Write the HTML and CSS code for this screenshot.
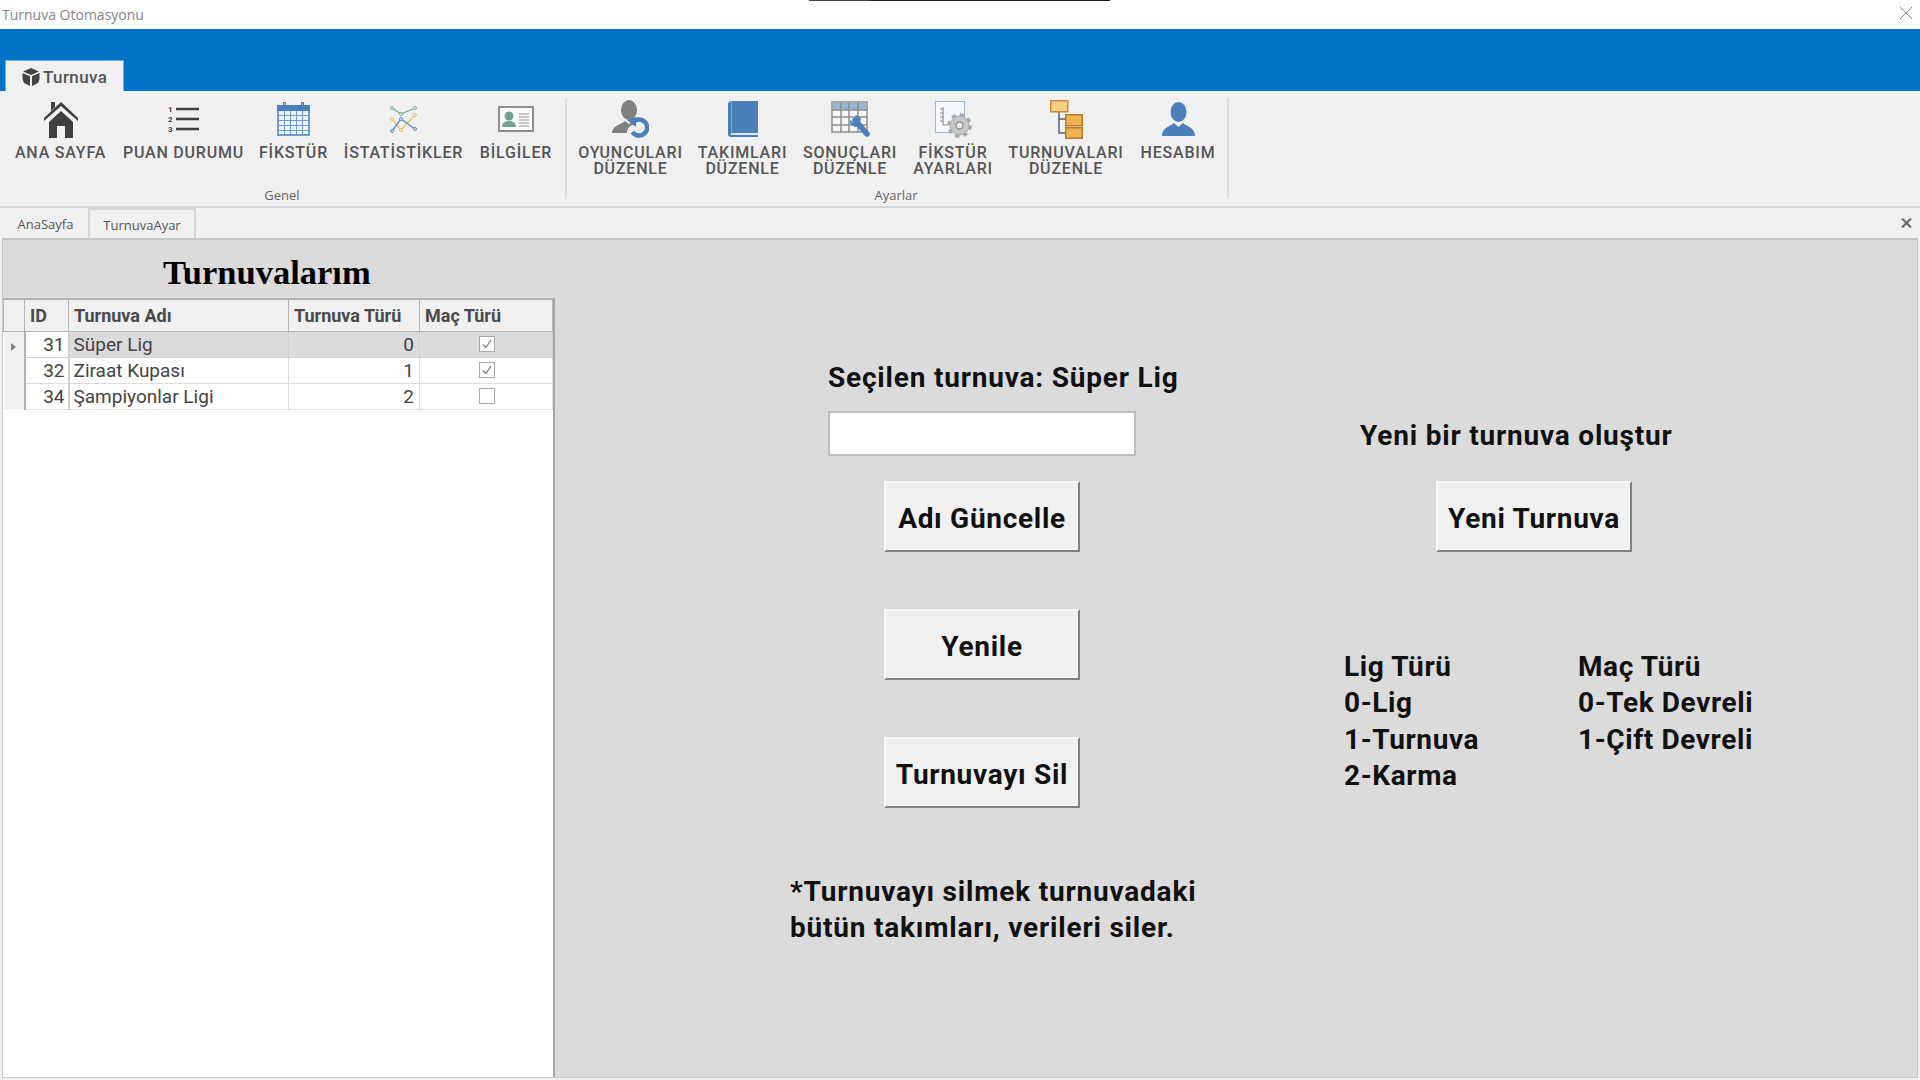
FILE: index.html
```html
<!DOCTYPE html>
<html lang="tr">
  <head>
    <meta charset="UTF-8" />
    <title>Turnuva Otomasyonu</title>
    <link rel="stylesheet" href="styles.css">
  </head>
  <body>
    <!-- Title bar -->
    <div class="titlebar">
      <span class="app-title">Turnuva Otomasyonu</span>
      <span class="top-line"></span>
      <svg class="close-icon" width="12" height="12" viewBox="0 0 12 12"><path d="M0 0L12 12M12 0L0 12" stroke="#8a8a8a" stroke-width="1" fill="none"/></svg>
    </div>

    <!-- Ribbon tab strip -->
    <div class="tabstrip">
      <div class="ribbon-tab">
        <svg width="18" height="18" viewBox="0 0 18 18"><path d="M9 0L17 3.5L9 7L1 3.5Z" fill="#444"/><path d="M0.500 5L8 8.300V18L2 15L0.500 11Z" fill="#444"/><path d="M17.500 5L10 8.300V18L16 15L17.500 11Z" fill="#444"/></svg>
        <span>Turnuva</span>
      </div>
    </div>

    <!-- Ribbon -->
    <div class="ribbon">
      <div class="group group-genel">
        <div class="items">
          <div class="item w-ana">
            <div class="icon"><svg width="34" height="37" viewBox="0 0 34 37"><path d="M7 1H11V6L7 10Z" fill="#3f3f3f"/><path d="M0 17L17 1L34 17V20L17 5L0 20Z" fill="#3f3f3f"/><path d="M5 21L17 10L29 21V37H21V25H13V37H5Z" fill="#3f3f3f"/></svg></div>
            <div class="label">ANA SAYFA</div>
          </div>
          <div class="item w-puan">
            <div class="icon"><svg width="31" height="30" viewBox="0 0 31 30"><text x="0" y="8" class="mini">1</text><text x="0" y="18" class="mini">2</text><text x="0" y="28" class="mini">3</text><path d="M8 5H31M8 15H31M8 25H31" stroke="#3f3f3f" stroke-width="2.500"/></svg></div>
            <div class="label">PUAN DURUMU</div>
          </div>
          <div class="item w-fikstur">
            <div class="icon"><svg width="33" height="34" viewBox="0 0 33 34"><rect x="0" y="8" width="33" height="26" fill="#6f9bcb"/><rect x="0" y="3" width="33" height="6" fill="#4a7fba"/><rect x="6" y="0" width="3" height="6" fill="#4a7fba"/><rect x="24" y="0" width="3" height="6" fill="#4a7fba"/><path d="M7 2H8M25 2H26" stroke="#fff"/><path d="M2 9H7V13H2ZM8 9H13V13H8ZM14 9H19V13H14ZM20 9H25V13H20ZM26 9H31V13H26ZM2 14H7V18H2ZM8 14H13V18H8ZM14 14H19V18H14ZM20 14H25V18H20ZM26 14H31V18H26ZM2 19H7V23H2ZM8 19H13V23H8ZM14 19H19V23H14ZM20 19H25V23H20ZM26 19H31V23H26ZM2 24H7V28H2ZM8 24H13V28H8ZM14 24H19V28H14ZM20 24H25V28H20ZM26 24H31V28H26ZM2 29H7V32H2ZM8 29H13V32H8ZM14 29H19V32H14ZM20 29H25V32H20ZM26 29H31V32H26Z" fill="#eef3f9"/></svg></div>
            <div class="label">FİKSTÜR</div>
          </div>
          <div class="item w-ist">
            <div class="icon"><svg width="28" height="27" viewBox="0 0 28 27">
              <path d="M2 2L11 8L25 2" stroke="#7fb09a" stroke-width="1.300" fill="none"/>
              <path d="M2 13L11 24L25 9" stroke="#e8c264" stroke-width="1.300" fill="none"/>
              <path d="M2 25L11 13L25 23" stroke="#5b8dc4" stroke-width="1.300" fill="none"/>
              <g fill="#f0f0f0" stroke-width="1"><circle cx="2" cy="2" r="1.500" stroke="#7fb09a"/><circle cx="11" cy="8" r="1.500" stroke="#7fb09a"/><circle cx="25" cy="2" r="1.500" stroke="#7fb09a"/><circle cx="2" cy="13" r="1.500" stroke="#e8c264"/><circle cx="11" cy="24" r="1.500" stroke="#e8c264"/><circle cx="25" cy="9" r="1.500" stroke="#e8c264"/><circle cx="2" cy="25" r="1.500" stroke="#5b8dc4"/><circle cx="11" cy="13" r="1.500" stroke="#5b8dc4"/><circle cx="25" cy="23" r="1.500" stroke="#5b8dc4"/></g>
            </svg></div>
            <div class="label">İSTATİSTİKLER</div>
          </div>
          <div class="item w-bilgi">
            <div class="icon"><svg width="36" height="26" viewBox="0 0 36 26"><rect x="1" y="1" width="34" height="24" fill="#fff" stroke="#8f8f8f" stroke-width="2"/><circle cx="11" cy="10" r="4.500" fill="#6fa48f"/><path d="M4 21C4 16 8 15 11 15C14 15 18 16 18 21Z" fill="#6fa48f"/><path d="M21 8H31M21 11H31M21 14H31M21 17H31M21 20H31" stroke="#8f8f8f" stroke-width="1"/></svg></div>
            <div class="label">BİLGİLER</div>
          </div>
        </div>
        <div class="caption">Genel</div>
      </div>

      <div class="group group-ayarlar">
        <div class="items">
          <div class="item w-oyuncu">
            <div class="icon"><svg width="37" height="38" viewBox="0 0 37 38"><ellipse cx="17" cy="10" rx="8" ry="10" fill="#808080"/><path d="M0 33C0 26 8 25 13 21L17 24L21 21L24 24C18 25 15 28 15 33Z" fill="#808080"/><path d="M21 22.500A8 8 0 1 1 20.500 32" stroke="#4a7fba" stroke-width="4.500" fill="none"/><path d="M15 20L24 17V27Z" fill="#4a7fba"/></svg></div>
            <div class="label">OYUNCULARI<br>DÜZENLE</div>
          </div>
          <div class="item w-takim">
            <div class="icon"><svg width="30" height="36" viewBox="0 0 30 36"><path d="M4 0H30V32H4C2 32 2 34 4 34H30V36H3C1 36 0 35 0 33V3C0 1 2 0 4 0Z" fill="#4a7fba"/><path d="M3 33.200H30" stroke="#cfe0f0" stroke-width="1"/><path d="M3.500 0V31" stroke="#7ca6d2" stroke-width="1"/></svg></div>
            <div class="label">TAKIMLARI<br>DÜZENLE</div>
          </div>
          <div class="item w-sonuc">
            <div class="icon"><svg width="39" height="36" viewBox="0 0 39 36"><rect x="1" y="1" width="35" height="30" fill="#f5f5f5" stroke="#8f8f8f" stroke-width="1.500"/><rect x="2" y="2" width="33" height="7" fill="#95b6d9"/><path d="M10 1V31M18 1V31M27 1V31M1 9H36M1 16H36M1 24H36" stroke="#8f8f8f" stroke-width="1.500"/><path d="M24 19L36 33" stroke="#4a7fba" stroke-width="5.500" stroke-linecap="round"/><path d="M19 19A6 6 0 0 0 28 25L30 18C29 15 26 14 24 14L27 19L23 22Z" fill="#4a7fba"/></svg></div>
            <div class="label">SONUÇLARI<br>DÜZENLE</div>
          </div>
          <div class="item w-ayar">
            <div class="icon"><svg width="37" height="37" viewBox="0 0 37 37"><rect x="0.500" y="0.500" width="29" height="31" fill="#f4f7fb" stroke="#9db7d6"/><path d="M8 6V24H13M8 8H5M8 12H5M8 16H5M8 20H5" stroke="#8f8f8f" stroke-width="1.200" fill="none"/><circle cx="24.500" cy="24.500" r="9.500" fill="#c9c9c9" stroke="#a8a8a8" stroke-width="1"/><circle cx="24.500" cy="24.500" r="10.500" fill="none" stroke="#a8a8a8" stroke-width="3.500" stroke-dasharray="4.200 4.050"/><circle cx="24.500" cy="24.500" r="3.500" fill="#f0f0f0" stroke="#8f8f8f" stroke-width="1.500"/></svg></div>
            <div class="label">FİKSTÜR<br>AYARLARI</div>
          </div>
          <div class="item w-turnuva">
            <div class="icon"><svg width="33" height="39" viewBox="0 0 33 39"><path d="M9 10V33H16M9 19H16" stroke="#5a6270" stroke-width="1.500" fill="none"/><rect x="0.750" y="0.750" width="17" height="11" fill="#f6cf84" stroke="#c98a3a" stroke-width="1.500"/><rect x="15.750" y="14.750" width="16.500" height="11" fill="#f0b24e" stroke="#b97a2c" stroke-width="1.500"/><rect x="15.750" y="27.750" width="16.500" height="10.500" fill="#f0b24e" stroke="#b97a2c" stroke-width="1.500"/></svg></div>
            <div class="label">TURNUVALARI<br>DÜZENLE</div>
          </div>
          <div class="item w-hesap">
            <div class="icon"><svg width="33" height="34" viewBox="0 0 33 34"><ellipse cx="16.500" cy="10" rx="8" ry="10" fill="#4a7fba"/><path d="M0 34C0 26 7 25 12 21L16.500 25L21 21C26 25 33 26 33 34Z" fill="#4a7fba"/></svg></div>
            <div class="label">HESABIM</div>
          </div>
        </div>
        <div class="caption">Ayarlar</div>
      </div>
    </div>

    <!-- Document tabs -->
    <div class="doctabs">
      <div class="doctab">AnaSayfa</div>
      <div class="doctab active">TurnuvaAyar</div>
      <svg class="doc-close" width="11" height="10" viewBox="0 0 11 10"><path d="M1 0.500L10 9.500M10 0.500L1 9.500" stroke="#6e6e6e" stroke-width="2.200" fill="none"/></svg>
    </div>

    <!-- Main -->
    <main class="pane">
      <section class="left-panel">
        <h1 class="panel-title">Turnuvalarım</h1>
        <div class="grid-wrap">
          <table class="grid">
            <thead>
              <tr>
                <th class="c-head"></th>
                <th class="c-id">ID</th>
                <th class="c-name">Turnuva Adı</th>
                <th class="c-type">Turnuva Türü</th>
                <th class="c-match">Maç Türü</th>
              </tr>
            </thead>
            <tbody>
              <tr class="selected">
                <td class="c-head"><span class="row-arrow"></span></td>
                <td class="num id-cell">31</td>
                <td>Süper Lig</td>
                <td class="num">0</td>
                <td class="check-cell"><span class="check"><svg width="14" height="14" viewBox="0 0 14 14"><path d="M3 7.500L6 10.500L11 3" stroke="#808080" stroke-width="1.300" fill="none"/></svg></span></td>
              </tr>
              <tr>
                <td class="c-head"></td>
                <td class="num id-cell">32</td>
                <td>Ziraat Kupası</td>
                <td class="num">1</td>
                <td class="check-cell"><span class="check"><svg width="14" height="14" viewBox="0 0 14 14"><path d="M3 7.500L6 10.500L11 3" stroke="#808080" stroke-width="1.300" fill="none"/></svg></span></td>
              </tr>
              <tr>
                <td class="c-head"></td>
                <td class="num id-cell">34</td>
                <td>Şampiyonlar Ligi</td>
                <td class="num">2</td>
                <td class="check-cell"><span class="check"></span></td>
              </tr>
            </tbody>
          </table>
        </div>
      </section>

      <section class="form-area">
        <div class="col-edit">
          <div class="text selected-label">Seçilen turnuva: Süper Lig</div>
          <input class="name-input" type="text" />
          <button class="btn first-btn">Adı Güncelle</button>
          <button class="btn">Yenile</button>
          <button class="btn">Turnuvayı Sil</button>
          <p class="text note">*Turnuvayı silmek turnuvadaki<br>bütün takımları, verileri siler.</p>
        </div>
        <div class="col-new">
          <div class="text new-label">Yeni bir turnuva oluştur</div>
          <button class="btn new-btn">Yeni Turnuva</button>
          <div class="legend">
            <div class="text">Lig Türü<br>0-Lig<br>1-Turnuva<br>2-Karma</div>
            <div class="text">Maç Türü<br>0-Tek Devreli<br>1-Çift Devreli</div>
          </div>
        </div>
      </section>
    </main>
  </body>
</html>
```

FILE: styles.css
```css
/* Turnuva Otomasyonu */

* {
  margin: 0;
  padding: 0;
  box-sizing: border-box;
}

html,
body {
  height: 100%;
  overflow: hidden;
}

body {
  font-family: Roboto, "Liberation Sans", sans-serif;
  background: #f0f0f0;
  color: #555;
}

/* Title bar */
.titlebar {
  position: relative;
  height: 29px;
  background: #fff;
  display: flex;
  align-items: center;
  padding-left: 2px;
}

.app-title {
  font-family: "Open Sans", sans-serif;
  font-size: 14px;
  color: #858585;
}

.top-line {
  position: absolute;
  top: 0;
  left: 809px;
  width: 301px;
  height: 1px;
  background: linear-gradient(to right, #444 60px, #222 60px);
}

.close-icon {
  position: absolute;
  top: 7px;
  right: 8px;
}

/* Ribbon */
.tabstrip {
  height: 62px;
  background: #0072c6;
  border-top: 1px solid #0a6cb8;
  display: flex;
  align-items: flex-end;
  padding-left: 5px;
}

.ribbon-tab {
  width: 119px;
  height: 31px;
  background: #f0f0f0;
  border: 1px solid #6fb0e0;
  border-bottom: none;
  display: flex;
  align-items: center;
  gap: 3px;
  padding-left: 16px;
  padding-top: 1px;
  font-size: 17px;
  font-weight: 500;
  letter-spacing: 0.4px;
  color: #555;
}

.ribbon {
  height: 117px;
  background: #f0f0f0;
  border-bottom: 2px solid #d5d5d5;
  display: flex;
  padding-top: 7px;
}

.group {
  height: 101px;
  display: flex;
  flex-direction: column;
  align-items: center;
  border-right: 2px solid #dcdcdc;
  padding-right: 6px;
}

.group-genel {
  width: 567px;
  padding-left: 5px;
}

.group-ayarlar {
  width: 662px;
  padding-left: 4px;
}

.items {
  display: flex;
  align-self: flex-start;
}

.item {
  display: flex;
  flex-direction: column;
  align-items: center;
  font-size: 16px;
  line-height: 16px;
  letter-spacing: 0.800px;
  color: #555;
}

.w-ana { width: 111px; }
.w-puan { width: 135px; }
.w-fikstur { width: 85px; }
.w-ist { width: 135px; }
.w-bilgi { width: 90px; }

.w-oyuncu { width: 119px; }
.w-takim { width: 105px; }
.w-sonuc { width: 110px; }
.w-ayar { width: 96px; }
.w-turnuva { width: 130px; }
.w-hesap { width: 94px; }

.icon {
  height: 42px;
  margin-bottom: 5px;
  display: flex;
  align-items: center;
  justify-content: center;
}

.mini {
  font-size: 8px;
  font-weight: 700;
  fill: #3f3f3f;
}

.label {
  font-weight: 500;
  text-align: center;
  white-space: nowrap;
}

.caption {
  margin-top: auto;
  margin-bottom: -4px;
  font-family: "Open Sans", sans-serif;
  font-size: 13px;
  line-height: 16px;
  color: #666;
}

/* Document tabs */
.doctabs {
  position: relative;
  height: 30px;
  display: flex;
  padding-left: 3px;
  font-family: "Open Sans", sans-serif;
  font-size: 13px;
  color: #555;
}

.doctab {
  padding: 0 10px;
  line-height: 32px;
  width: 85px;
  text-align: center;
}

.doctab.active {
  width: 108px;
  height: 30px;
  background: #f0f0f0;
  border: 2px solid #d5d5d5;
  border-bottom: none;
  position: relative;
  z-index: 1;
  padding: 0;
  line-height: 30px;
}

.doc-close {
  position: absolute;
  top: 10px;
  right: 8px;
}

/* Main pane */
.pane {
  height: 840px;
  margin: 0 2px;
  background: #dbdbdb;
  border: 1px solid #c8c8c8;
  border-top-width: 2px;
  display: flex;
}

.left-panel {
  width: 552px;
  display: flex;
  flex-direction: column;
  flex-shrink: 0;
}

.panel-title {
  height: 58px;
  padding-top: 14px;
  padding-left: 160px;
  font-family: "Liberation Serif", serif;
  font-size: 34.500px;
  font-weight: 700;
  line-height: 36px;
  color: #000;
}

.grid-wrap {
  flex: 1;
  background: #fff;
  border-right: 2px solid #a8a8a8;
}

/* Table */
.grid {
  width: 550px;
  table-layout: fixed;
  border-collapse: collapse;
  font-size: 19px;
  color: #444;
}

.grid th {
  height: 32px;
  background: #f0f0f0;
  border: 1px solid #b4b4b4;
  border-top: 2px solid #b4b4b4;
  font-size: 18px;
  font-weight: 700;
  text-align: left;
  padding-left: 5px;
  color: #4a4a4a;
}

.grid td {
  height: 26px;
  border: 1px solid #dcdcdc;
  padding: 0 5px 0 4px;
  white-space: nowrap;
}

.c-head { width: 21px; }
.c-id { width: 44px; }
.c-name { width: 220px; }
.c-type { width: 131px; }

.grid td.c-head {
  background: #f0f0f0;
  border: none;
  border-right: 2px solid #b4b4b4;
  padding: 0;
  text-align: center;
}

.grid td.id-cell {
  border-right: 2px solid #d0d0d0;
  padding-right: 3px;
}

.num {
  text-align: right;
}

.selected td {
  background: #dbdbdb;
  border-color: #d0d0d0;
}

.selected td.id-cell {
  background: #fff;
}

.row-arrow {
  display: inline-block;
  border-left: 5px solid #808080;
  border-top: 4px solid transparent;
  border-bottom: 4px solid transparent;
}

.grid td.check-cell {
  text-align: center;
  padding: 0 3px 0 5px;
}

.check {
  display: inline-flex;
  vertical-align: middle;
  width: 16px;
  height: 16px;
  margin-bottom: 3px;
  background: #fff;
  border: 1px solid #a8a8a8;
}

/* Form */
.form-area {
  flex: 1;
  display: flex;
  padding-left: 235px;
  padding-top: 120px;
}

.text {
  font-size: 28px;
  line-height: 36px;
  font-weight: 700;
  letter-spacing: 0.800px;
  color: #111;
  white-space: nowrap;
}

.col-edit {
  width: 384px;
  margin-right: 170px;
  display: flex;
  flex-direction: column;
  align-items: center;
}

.selected-label {
  align-self: flex-start;
  margin-left: 38px;
}

.name-input {
  width: 308px;
  height: 45px;
  margin-top: 15px;
  background: #fff;
  border: 2px solid #bdbdbd;
}

.btn {
  width: 196px;
  height: 71px;
  margin-top: 57px;
  padding-top: 3px;
  background: #f0f0f0;
  border: 2px solid;
  border-color: #f8f8f8 #808080 #808080 #f8f8f8;
  font-family: Roboto, sans-serif;
  font-size: 28px;
  font-weight: 700;
  letter-spacing: 0.700px;
  color: #111;
}

.first-btn {
  margin-top: 25px;
}

.note {
  align-self: flex-start;
  margin-top: 66px;
}

.col-new {
  padding-top: 58px;
  display: flex;
  flex-direction: column;
}

.new-label {
  margin-left: 16px;
}

.new-btn {
  margin-top: 27px;
  margin-left: 92px;
}

.legend {
  display: flex;
  margin-top: 97px;
}

.legend .text {
  width: 234px;
  line-height: 36.300px;
  letter-spacing: 0.600px;
}
```
